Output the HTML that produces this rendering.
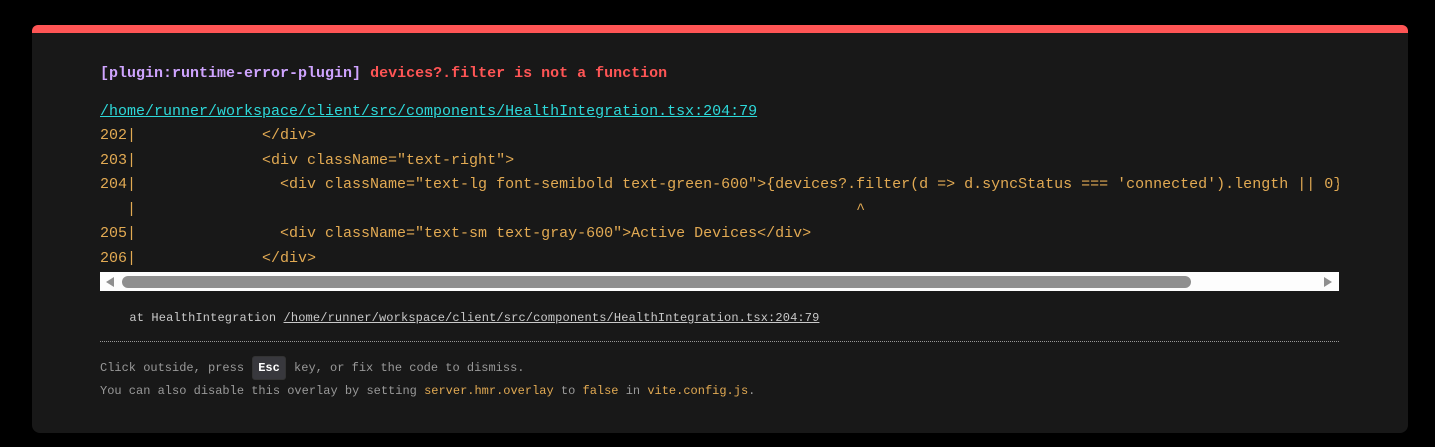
<!DOCTYPE html>
<html><head><meta charset="utf-8"><style>
html,body{margin:0;padding:0;background:#000;width:1435px;height:447px;overflow:hidden}
.win{position:absolute;left:32px;top:25px;width:1376px;height:408px;background:#181818;border-radius:6px 6px 8px 8px;border-top:8px solid #ff5555;box-sizing:border-box}
.t{position:absolute;white-space:pre;font-family:"Liberation Mono",monospace}
.m{font-size:15px;font-weight:bold;line-height:20px}
.c{font-size:15px;color:#e2aa53;line-height:24.6px}
.s{font-size:12px;color:#c9c9c9;line-height:16px;letter-spacing:0.14px}
.tip{font-size:12px;color:#999;line-height:16px}
code{color:#e2aa53;font-family:inherit}
kbd{display:inline-block;background:#38383d;color:#fff;font-weight:bold;border-radius:3px;padding:0 5px;font-family:inherit;line-height:22px;margin:0 1px;border:1px solid #333}
</style></head><body>
<div class="win"></div>
<div class="t m" style="left:100px;top:64px"><span style="color:#cfa4ff">[plugin:runtime-error-plugin]</span> <span style="color:#ff5555">devices?.filter is not a function</span></div>
<div class="t c" style="left:100px;top:100px;color:#2dd9da;text-decoration:underline">/home/runner/workspace/client/src/components/HealthIntegration.tsx:204:79</div>
<div class="t c" style="left:100px;top:124px;width:1239px;overflow:hidden">202|              &lt;/div&gt;
203|              &lt;div className="text-right"&gt;
204|                &lt;div className="text-lg font-semibold text-green-600"&gt;{devices?.filter(d =&gt; d.syncStatus === 'connected').length || 0}
   |                                                                                ^
205|                &lt;div className="text-sm text-gray-600"&gt;Active Devices&lt;/div&gt;
206|              &lt;/div&gt;</div>
<div style="position:absolute;left:100px;top:272px;width:1239px;height:19px;background:#fdfdfd"></div>
<svg style="position:absolute;left:104px;top:276px" width="12" height="12"><polygon points="10,1 10,11 2,6" fill="#8f8f8f"/></svg>
<svg style="position:absolute;left:1322px;top:276px" width="12" height="12"><polygon points="2,1 2,11 10,6" fill="#8f8f8f"/></svg>
<div style="position:absolute;left:122px;top:276px;width:1069px;height:12px;background:#8f8f8f;border-radius:6px"></div>
<div class="t s" style="left:100px;top:310px">    at HealthIntegration <span style="text-decoration:underline">/home/runner/workspace/client/src/components/HealthIntegration.tsx:204:79</span></div>
<div style="position:absolute;left:100px;top:341px;width:1239px;border-top:1px dotted #999"></div>
<div class="t tip" style="left:100px;top:356px">Click outside, press <kbd>Esc</kbd> key, or fix the code to dismiss.</div>
<div class="t tip" style="left:100px;top:383px">You can also disable this overlay by setting <code>server.hmr.overlay</code> to <code>false</code> in <code>vite.config.js</code>.</div>
</body></html>
